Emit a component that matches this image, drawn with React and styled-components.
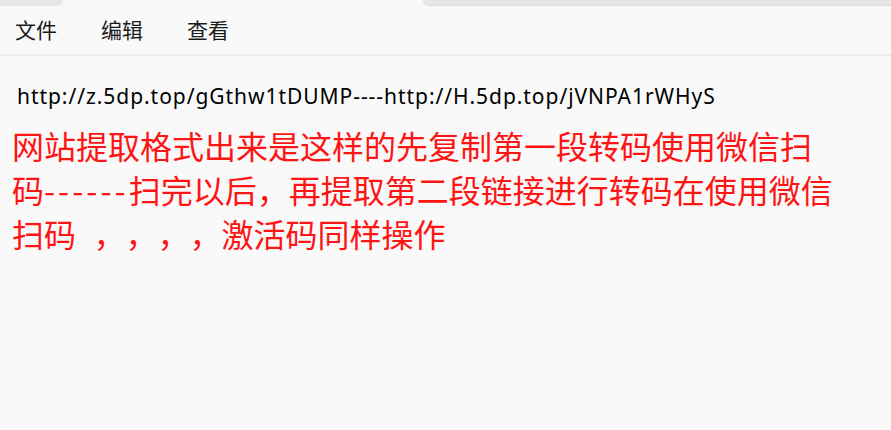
import React from "react";
import styled, { createGlobalStyle } from "styled-components";

const Global = createGlobalStyle`
  html, body { margin: 0; padding: 0; background: #f9f9f9; }
  body { width: 891px; height: 430px; overflow: hidden; }
`;

const Window = styled.div`
  display: flex;
  flex-direction: column;
  width: 891px;
  height: 430px;
  background: #f9f9f9;
`;

const TabStrip = styled.div`
  display: flex;
  height: 6px;
  background: #f9f9f9;
`;

const TabStub = styled.div`
  background: #e6e6e6;
  width: ${(p) => p.$width || "auto"};
  flex: ${(p) => (p.$grow ? 1 : "none")};
  border-bottom-left-radius: ${(p) => (p.$side === "right" ? "6px" : "0")};
  border-bottom-right-radius: ${(p) => (p.$side === "left" ? "6px" : "0")};
  box-shadow: inset 0 -1px 0 ${(p) => (p.$shade ? "#dcdcdc" : "transparent")};
`;

const TabGap = styled.div`
  width: 360px;
`;

const MenuBar = styled.nav`
  display: flex;
  align-items: center;
  gap: 44px;
  height: 48px;
  padding-left: 15px;
  border-bottom: 2px solid #ebebeb;
  font-family: "Noto Sans CJK SC", "Noto Sans", sans-serif;
  font-size: 21px;
  color: #1b1b1b;
`;

const MenuItem = styled.span`
  line-height: 1;
  padding-bottom: 2px;
`;

const Editor = styled.main`
  display: flex;
  flex-direction: column;
  padding: 26px 0 0 12px;
`;

const UrlLine = styled.div`
  font-family: "Noto Sans", "Open Sans", sans-serif;
  font-size: 21px;
  letter-spacing: 0.95px;
  line-height: 28px;
  color: #000;
  padding-left: 5px;
  white-space: nowrap;
`;

const Note = styled.p`
  margin: 13px 0 0 0;
  width: 826px;
  font-family: "Noto Sans CJK SC", sans-serif;
  font-size: 32px;
  line-height: 44px;
  color: #ff1414;
  white-space: pre-wrap;
  text-spacing-trim: space-all;
  font-kerning: none;
`;

const Dashes = styled.span`
  letter-spacing: 3px;
`;

const Spaces = styled.span`
  letter-spacing: 1.6px;
`;

export default function App() {
  return (
    <Window>
      <Global />
      <TabStrip>
        <TabStub $side="left" $width="63px" />
        <TabGap />
        <TabStub $side="right" $grow $shade />
      </TabStrip>
      <MenuBar>
        <MenuItem>文件</MenuItem>
        <MenuItem>编辑</MenuItem>
        <MenuItem>查看</MenuItem>
      </MenuBar>
      <Editor>
        <UrlLine>http://z.5dp.top/gGthw1tDUMP----http://H.5dp.top/jVNPA1rWHyS</UrlLine>
        <Note>
          网站提取格式出来是这样的先复制第一段转码使用微信扫码<Dashes>------</Dashes>扫完以后，再提取第二段链接进行转码在使用微信扫码<Spaces>{"  "}</Spaces>，，，，激活码同样操作
        </Note>
      </Editor>
    </Window>
  );
}
